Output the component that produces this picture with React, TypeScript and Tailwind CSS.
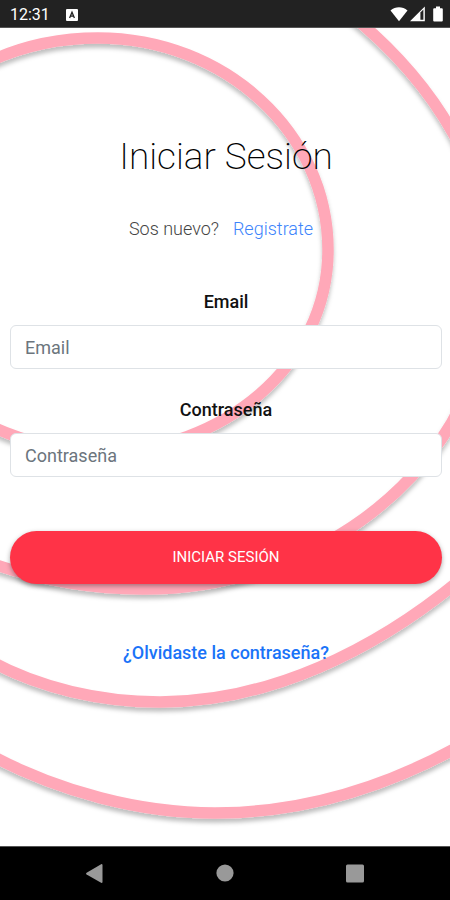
import { useState } from "react";

const rings = [
  "M-10 61 C25 45 60 38 98 38 C225 38 328 133 328 250 C328 365 222 452 100 452 C62 452 28 443 -10 426",
  "M345 10 C440 85 492 180 492 275 C492 360 455 430 412 476 C345 548 245 589 143 589 C90 589 40 580 -10 563",
  "M-10 661 C40 688 100 702 160 702 C270 702 375 650 460 580",
  "M-10 755 C60 792 140 813 215 813 C300 813 380 790 460 746",
];

function RingsBackground() {
  return (
    <svg
      className="pointer-events-none absolute inset-0 h-full w-full"
      viewBox="0 28 450 818"
      preserveAspectRatio="xMidYMid slice"
      aria-hidden="true"
    >
      <defs>
        <filter id="ring-shadow" x="-20%" y="-40%" width="140%" height="180%">
          <feDropShadow dx="0" dy="4" stdDeviation="2" floodColor="#000" floodOpacity="0.25" />
        </filter>
      </defs>
      {rings.map((d) => (
        <path key={d} d={d} fill="none" stroke="#ffa8b8" strokeWidth="11.5" filter="url(#ring-shadow)" />
      ))}
    </svg>
  );
}

function StatusBar() {
  return (
    <header className="flex h-7 items-center justify-between border-b border-[#555] bg-[#222] pr-1.5 pl-2.5 text-white">
      <div className="flex items-center gap-4 pt-0.5">
        <span className="text-base leading-none">12:31</span>
        <svg className="h-3 w-3" viewBox="0 0 12 12" aria-hidden="true">
          <rect width="12" height="12" rx="1" fill="#fff" />
          <path d="M3.6 9 6 3.2 8.4 9M4.5 7.2h3" fill="none" stroke="#222" strokeWidth="1.3" />
        </svg>
      </div>
      <div className="flex items-center gap-0.5">
        <svg className="h-4 w-[18px]" viewBox="0 0 18 16" aria-hidden="true">
          <path d="M0.5 4.5C5.5 0.3 12.5 0.3 17.5 4.5L9 15.3Z" fill="#fff" />
        </svg>
        <svg className="h-4 w-4" viewBox="0 0 16 16" aria-hidden="true">
          <path d="M0 15.3 14.8 0.5V15.3Z" fill="#fff" />
          <path d="M10.4 6.6 13.4 3.6V13.8H10.4Z" fill="#222" />
        </svg>
        <svg className="ml-1 h-4 w-3" viewBox="0 0 12 16" aria-hidden="true">
          <path d="M4 0.5h4v1.7h1.8a1 1 0 0 1 1 1v11.3a1 1 0 0 1-1 1H2.2a1 1 0 0 1-1-1V3.2a1 1 0 0 1 1-1H4Z" fill="#fff" />
        </svg>
      </div>
    </header>
  );
}

function NavBar() {
  return (
    <nav className="flex h-[54px] items-center justify-center gap-[110px] border-t border-[#555] bg-black text-[#999]">
      <button type="button" aria-label="Atrás">
        <svg className="h-5 w-5" viewBox="0 0 20 20" fill="currentColor" aria-hidden="true">
          <path d="M17.5 1v17a1 1 0 0 1-1.4.8L1.6 10.4a1 1 0 0 1 0-1.6L16.1 0.2a1 1 0 0 1 1.4.8Z" />
        </svg>
      </button>
      <button type="button" aria-label="Inicio">
        <svg className="h-5 w-5" viewBox="0 0 20 20" fill="currentColor" aria-hidden="true">
          <circle cx="10" cy="9" r="8.6" />
        </svg>
      </button>
      <button type="button" aria-label="Recientes">
        <svg className="h-5 w-5" viewBox="0 0 20 20" fill="currentColor" aria-hidden="true">
          <rect x="1" y="0.5" width="18" height="18" rx="1.5" />
        </svg>
      </button>
    </nav>
  );
}

const inputClass =
  "h-11 w-full rounded-md border border-[#dee2e6] bg-white px-3.5 text-lg text-[#212529] placeholder-[#6c757d] focus:border-blue-400 focus:outline-none";

const labelClass = "mb-[9px] block text-lg leading-7 font-medium text-[#111]";

export default function App() {
  const [email, setEmail] = useState("");
  const [password, setPassword] = useState("");

  return (
    <div className="flex min-h-screen flex-col bg-white font-['Roboto',sans-serif]">
      <StatusBar />

      <main className="relative flex-1 overflow-hidden">
        <RingsBackground />

        <div className="relative pt-[105px] pr-2 pl-2.5 text-center">
          <h1 className="text-[37px] leading-12 font-extralight text-black">Iniciar Sesión</h1>
          <p className="mt-[34px] flex justify-center gap-3.5 pr-2.5 text-lg leading-7 font-light text-[#444]">
            <span>Sos nuevo?</span>
            <a href="#registro" className="text-[#3d84fb]">
              Registrate
            </a>
          </p>

          <form onSubmit={(e) => e.preventDefault()}>
            <div className="mt-[45px]">
              <label htmlFor="email" className={labelClass}>
                Email
              </label>
              <input
                id="email"
                type="email"
                placeholder="Email"
                value={email}
                onChange={(e) => setEmail(e.target.value)}
                className={inputClass}
              />
            </div>
            <div className="mt-[27px]">
              <label htmlFor="password" className={labelClass}>
                Contraseña
              </label>
              <input
                id="password"
                type="password"
                placeholder="Contraseña"
                value={password}
                onChange={(e) => setPassword(e.target.value)}
                className={inputClass}
              />
            </div>
            <button
              type="submit"
              className="mt-[54px] h-[53px] w-full rounded-full bg-[#ff3347] text-[15px] text-white shadow-[0_2px_5px_rgba(0,0,0,0.35)]"
            >
              INICIAR SESIÓN
            </button>
          </form>

          <a href="#recuperar" className="mt-[55px] mb-8 inline-block text-lg leading-7 font-medium text-[#1a73f8]">
            ¿Olvidaste la contraseña?
          </a>
        </div>
      </main>

      <NavBar />
    </div>
  );
}
